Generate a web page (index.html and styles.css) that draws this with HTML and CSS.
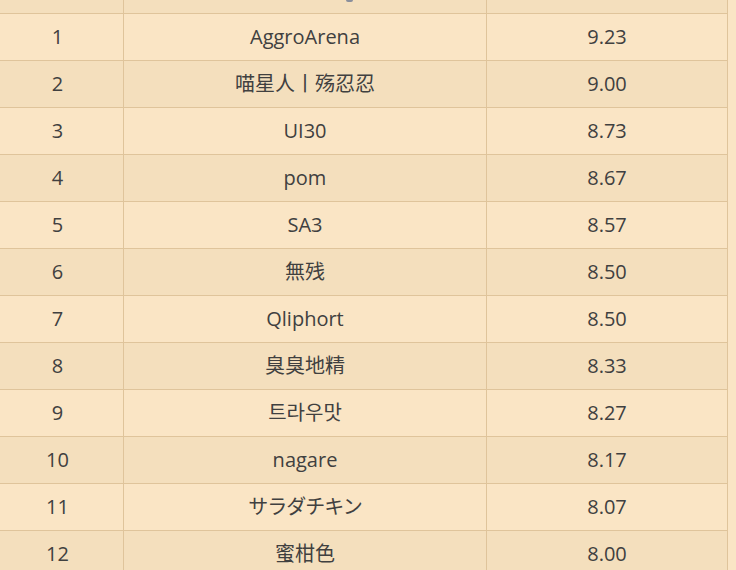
FILE: index.html
```html
<!DOCTYPE html>
<html>
<head>
<meta charset="utf-8">
<link rel="stylesheet" href="styles.css">
</head>
<body>
<div class="wrap">
<table class="rank">
  <colgroup><col class="c1"><col class="c2"><col class="c3"></colgroup>
  <thead>
    <tr class="head"><th></th><th><span class="mark"></span></th><th></th></tr>
  </thead>
  <tbody>
    <tr><td>1</td><td>AggroArena</td><td>9.23</td></tr>
    <tr><td>2</td><td>喵星人丨殇忍忍</td><td>9.00</td></tr>
    <tr><td>3</td><td>UI30</td><td>8.73</td></tr>
    <tr><td>4</td><td>pom</td><td>8.67</td></tr>
    <tr><td>5</td><td>SA3</td><td>8.57</td></tr>
    <tr><td>6</td><td>無残</td><td>8.50</td></tr>
    <tr><td>7</td><td>Qliphort</td><td>8.50</td></tr>
    <tr><td>8</td><td>臭臭地精</td><td>8.33</td></tr>
    <tr><td>9</td><td>트라우맛</td><td>8.27</td></tr>
    <tr><td>10</td><td>nagare</td><td>8.17</td></tr>
    <tr><td>11</td><td><span class="kana">サラダチキン</span></td><td>8.07</td></tr>
    <tr><td>12</td><td>蜜柑色</td><td>8.00</td></tr>
  </tbody>
</table>
</div>
</body>
</html>
```

FILE: styles.css
```css
html, body {
  margin: 0;
  padding: 0;
  background: #fae5c5;
}
.wrap {
  margin-left: -9px;
  width: 736px;
}
.rank {
  border-collapse: collapse;
  table-layout: fixed;
  width: 736px;
  font-family: "Open Sans", "Noto Sans CJK SC", "Noto Sans CJK KR", "Noto Sans CJK JP", sans-serif;
  font-size: 20px;
  color: #404040;
}
.c1 { width: 132px; }
.c2 { width: 363px; }
.c3 { width: 241px; }
.rank th, .rank td {
  border: 1px solid #dfc49b;
  text-align: center;
  padding: 0;
}
.rank td {
  height: 46px;
  line-height: 46px;
}
.rank tr:first-child td, .rank th { border-top: none; }
.head th {
  height: 13px;
  background: #f4dfbd;
  position: relative;
}
.mark {
  position: absolute;
  left: 222px;
  top: 0;
  width: 7px;
  height: 2px;
  background: #8a8f9c;
  border-radius: 0 0 3px 3px;
}
.kana {
  letter-spacing: -1px;
}
.rank tbody tr:nth-child(odd) td { background: #fae5c5; }
.rank tbody tr:nth-child(even) td { background: #f4dfbd; }
```
